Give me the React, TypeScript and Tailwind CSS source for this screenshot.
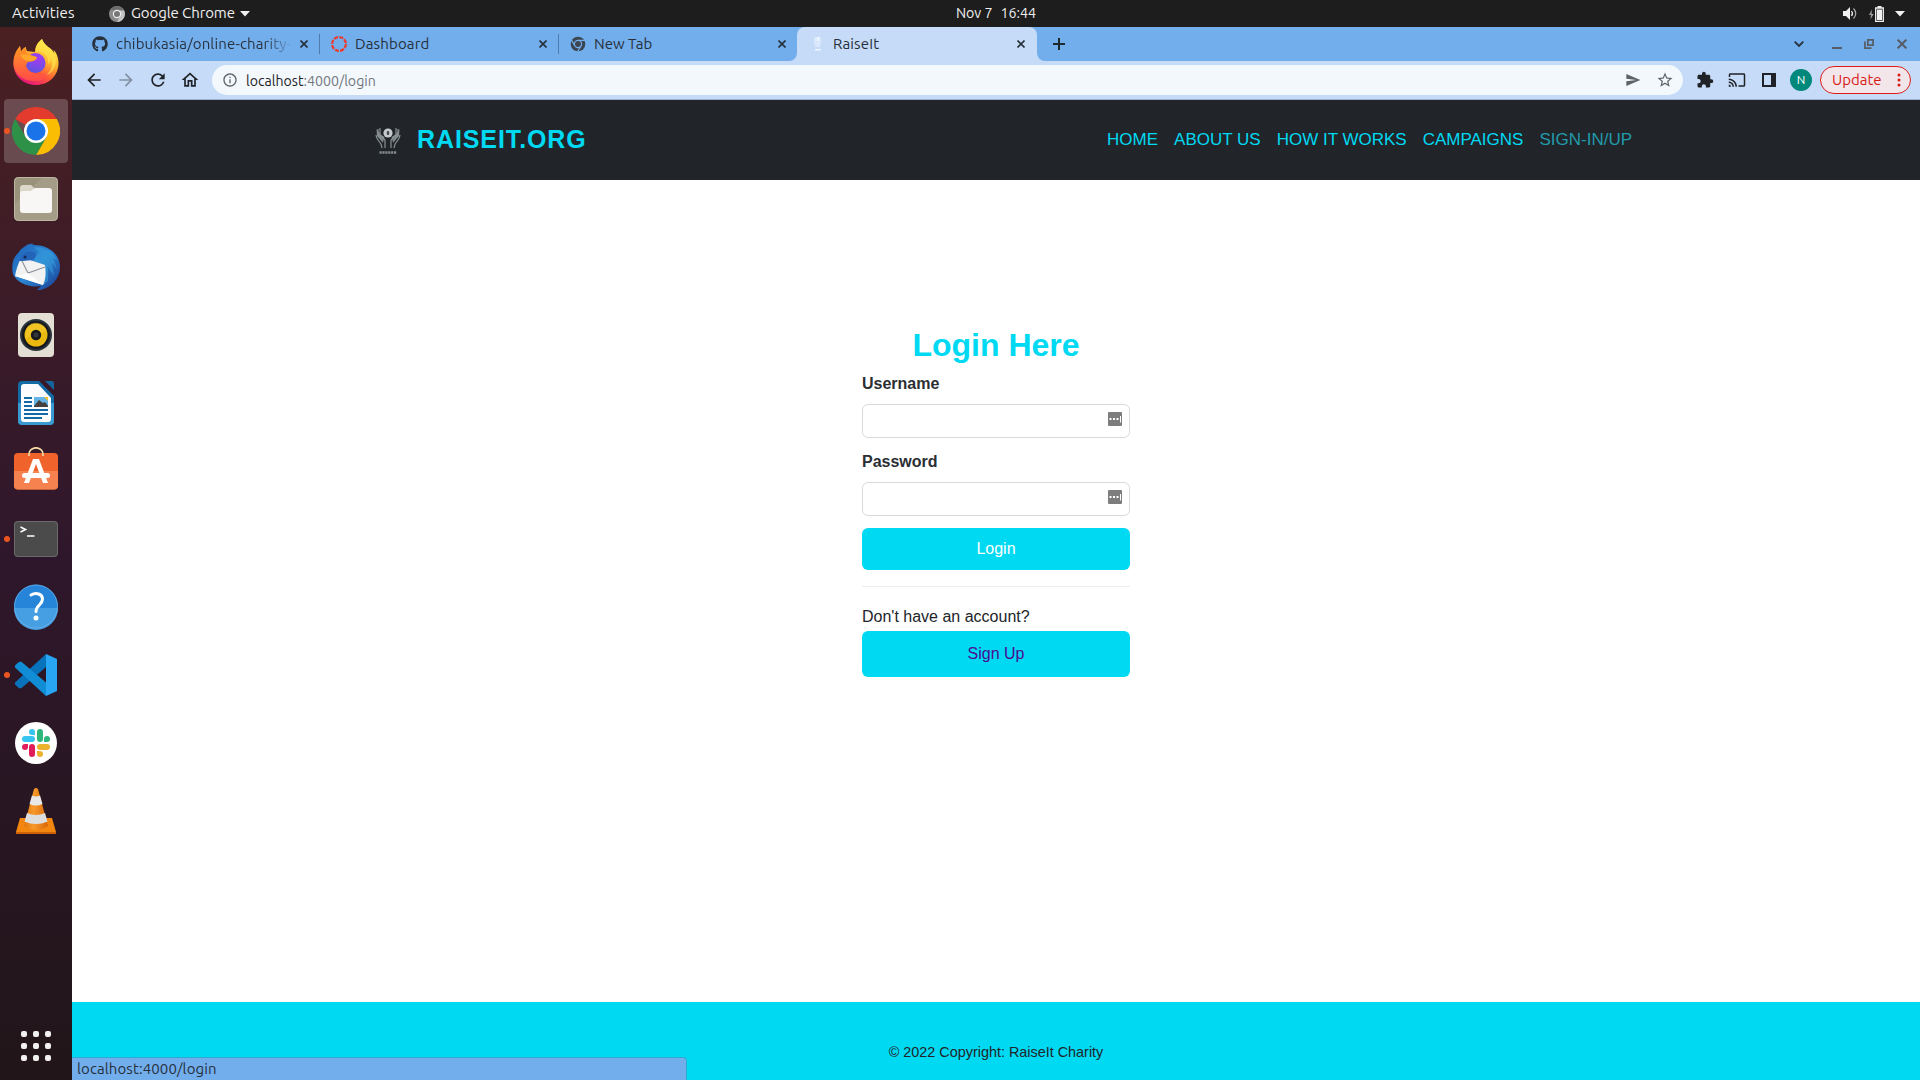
import React from "react";
import { FaGithub } from "react-icons/fa";
import {
  MdArrowBack,
  MdArrowForward,
  MdCast,
  MdExtension,
  MdInfoOutline,
  MdOutlineHome,
  MdRefresh,
  MdSend,
  MdStarBorder,
} from "react-icons/md";

type IconProps = { className?: string };

/* ---------- dock icons ---------- */

const Firefox = () => (
  <svg viewBox="0 0 48 48" className="size-12">
    <defs>
      <linearGradient id="ffBody" x1="0.8" y1="0.1" x2="0.3" y2="1">
        <stop offset="0" stopColor="#fff44f" />
        <stop offset="0.35" stopColor="#ffb22e" />
        <stop offset="0.65" stopColor="#ff5a36" />
        <stop offset="1" stopColor="#e5107f" />
      </linearGradient>
      <radialGradient id="ffGlobe" cx="0.6" cy="0.25" r="0.8">
        <stop offset="0" stopColor="#a63af5" />
        <stop offset="1" stopColor="#5a55dd" />
      </radialGradient>
      <linearGradient id="ffHead" x1="0" y1="0" x2="0" y2="1">
        <stop offset="0" stopColor="#ff9a1f" />
        <stop offset="1" stopColor="#ff4a4a" />
      </linearGradient>
    </defs>
    <path d="M30 0c-5 4-7 8-7 13l-8-1c-1-2-1-3-1-4-3 1-4 3-5 5l-1-6C4 12 1.500 18 1.500 25c0 12 10 21 22.500 21s22.500-9 22.500-22c0-5-2-11-5-13l1 4C40 8 33 8 30 0z" fill="url(#ffBody)" />
    <circle cx="23.500" cy="24" r="10" fill="url(#ffGlobe)" />
    <path d="M8 7C3 13 1.500 18 1.500 25 3 38 14 42 22 42c7 0 13-3 15-9-7 4-16 3-20-1-3-3-4-6-1-9 3 0 7-1 9-4l-6-3c-3 0-6-2-5-8-3 1-4 3-5 5z" fill="url(#ffHead)" />
    <path d="M8 16c5-2 10 0 17 2-1 4-5 5-10 4-4-1-5-4-7-6z" fill="#ffa62b" />
    <path d="M24 13c8-1 13 4 12 12 3-2 3-5 2-7 4 7 2 14-4 18 8-2 12-12 9-20C40 10 33 8 30 0c-4 4-7 7-6 13z" fill="#ffe14a" fillOpacity="0.7" />
  </svg>
);

const Chrome = () => (
  <svg viewBox="0 0 48 48" className="size-12">
    <path d="M24 24 3.200 12A24 24 0 0 1 44.800 12z" fill="#e33b2e" />
    <path d="M24 12H44.800A24 24 0 0 1 24 48L34.400 30z" fill="#fbbc04" />
    <path d="M13.600 30 3.200 12A24 24 0 0 0 24 48L34.400 30 24 32z" fill="#2d9247" />
    <circle cx="24" cy="24" r="12" fill="#fff" />
    <circle cx="24" cy="24" r="9.500" fill="#1a73e8" />
  </svg>
);

const Files = () => (
  <svg viewBox="0 0 48 48" className="size-12">
    <rect x="2" y="2" width="44" height="44" rx="4.500" fill="#9b927c" />
    <path d="M3 28 30 3h12a3 3 0 0 1 3 3v36a3 3 0 0 1-3 3H6a3 3 0 0 1-3-3z" fill="#a9a18d" fillOpacity="0.7" />
    <rect x="2.500" y="2.500" width="43" height="43" rx="4" fill="none" stroke="#bdb6a5" />
    <path d="M8 13a3 3 0 0 1 3-3h8l4 4h7v8H8z" fill="#dcd8c9" />
    <path d="M8 19a3 3 0 0 1 3-3h8l4-3h14a3 3 0 0 1 3 3v19a3 3 0 0 1-3 3H11a3 3 0 0 1-3-3z" fill="#f8f7f5" />
  </svg>
);

const Thunderbird = () => (
  <svg viewBox="0 0 48 48" className="size-12">
    <defs>
      <linearGradient id="tbBlue" x1="0" y1="0" x2="1" y2="1">
        <stop offset="0" stopColor="#1d5fb5" />
        <stop offset="0.5" stopColor="#2d86d4" />
        <stop offset="1" stopColor="#173a8f" />
      </linearGradient>
    </defs>
    <path d="M12 4c3-3 7-4 10-3l-2 1c16-1 28 9 28 22 0 11-8 20-19 23l-4 0 4-4C17 45 5 40 1 31-1 22 1 14 7 9c1-2 3-4 5-5z" fill="url(#tbBlue)" />
    <path d="M22 4c10 0 20 5 23 13l-4-2 4 11-5-6 2 13-6-9v14l-6 5-4-22-8-7c5 1 8-2 9-5z" fill="#37a0dc" fillOpacity="0.55" />
    <path d="m9 15 9 2 15 5c1 7 1 14-2 20L3 33c1-6 3-12 6-18z" fill="#f2f2f2" />
    <path d="m9 16 7 14 17-6" fill="none" stroke="#8d9299" strokeWidth="1.100" />
    <path d="M3 33 16 30l15 12z" fill="#fff" />
    <path d="M7 18c3-8 8-11 15-9 3 2 2 6-1 8l-10 1z" fill="#2363b8" />
    <circle cx="13" cy="14" r="1.500" fill="#122b55" />
  </svg>
);

const Rhythmbox = () => (
  <svg viewBox="0 0 48 48" className="size-12">
    <rect x="6" y="2" width="36" height="44" rx="4" fill="#e3dfd4" />
    <circle cx="24" cy="24" r="16" fill="#2d333c" />
    <circle cx="24" cy="24" r="14" fill="#15181d" />
    <circle cx="24" cy="24" r="11.500" fill="#eab90f" />
    <path d="M13 27 35 20a11.500 11.500 0 0 0-20-4z" fill="#f8cf38" fillOpacity="0.5" />
    <circle cx="24" cy="24" r="5.200" fill="#17191c" />
    <circle cx="24" cy="24" r="2.500" fill="#34373b" />
  </svg>
);

const Writer = () => (
  <svg viewBox="0 0 48 48" className="size-12">
    <path d="M10 2h17l15 15v25a4 4 0 0 1-4 4H10a4 4 0 0 1-4-4V6a4 4 0 0 1 4-4z" fill="#136ba5" />
    <path d="M6 24h36v18a4 4 0 0 1-4 4H10a4 4 0 0 1-4-4z" fill="#3a9bd0" />
    <path d="M33 2h7a2 2 0 0 1 2 2v7z" fill="#16649c" />
    <path d="M12 5h14l13 14v21a3 3 0 0 1-3 3H12a3 3 0 0 1-3-3V8a3 3 0 0 1 3-3z" fill="#fbfcfd" />
    <path d="M12 19h8M12 23h8M12 27h8M12 31h24M12 35h24M12 39h18" stroke="#136ba5" strokeWidth="2" />
    <rect x="22" y="18" width="14" height="10" fill="#62b5e6" />
    <path d="m22 27 5-6 4 3 2-1 3 4v1H22z" fill="#45413e" />
    <path d="M32 18h4v4z" fill="#f2c230" />
  </svg>
);

const Software = () => (
  <svg viewBox="0 0 48 48" className="size-12">
    <rect x="2" y="6" width="44" height="36.500" rx="4" fill="#f0642b" />
    <path d="M2 24h44v14.500a4 4 0 0 1-4 4H6a4 4 0 0 1-4-4z" fill="#f5824f" />
    <path d="M17 9V7a7 6.200 0 0 1 14 0v2" fill="none" stroke="#f5d9a5" strokeWidth="1.700" />
    <path d="M21 12h6l9 24h-5l-7-19-7 19h-5z" fill="#fff" />
    <rect x="10" y="26" width="28" height="5" rx="2.500" fill="#fff" />
  </svg>
);

const Terminal = () => (
  <svg viewBox="0 0 48 48" className="size-12">
    <rect x="2" y="6" width="44" height="36" rx="4" fill="#4b4b4b" />
    <rect x="2.500" y="6.500" width="43" height="35" rx="3.500" fill="none" stroke="#6a6a6a" />
    <path d="m8.500 12 5 2.500-5 2.500M15 21h7.500" fill="none" stroke="#fff" strokeWidth="1.600" />
  </svg>
);

const Help = () => (
  <svg viewBox="0 0 48 48" className="size-12">
    <circle cx="24" cy="23.500" r="22" fill="#2785d9" />
    <path d="M2 25a22 22 0 0 0 44 0z" fill="#469fe2" />
    <circle cx="24" cy="23.500" r="21.500" fill="none" stroke="#70b4e8" strokeOpacity="0.7" />
    <path d="M19 12c5-3 11.500-1 11.500 4 0 6-6.500 6-6.500 12.500" fill="none" stroke="#fff" strokeWidth="3" strokeLinecap="round" />
    <circle cx="24" cy="35" r="2.500" fill="#fff" />
  </svg>
);

const VsCode = () => (
  <svg viewBox="0 0 48 48" className="size-12">
    <path d="M34 3v13L9 37.500 6.500 36.800 3 33.500v-2z" fill="#0872ba" />
    <path d="M3 16.500v-2l3.500-3.300L9 10.500l25 21V45z" fill="#118dd6" />
    <path d="M34 3 45 8v32l-11 5z" fill="#28a6f4" />
  </svg>
);

const Slack = () => (
  <svg viewBox="0 0 48 48" className="size-12">
    <circle cx="24" cy="24" r="21" fill="#fff" />
    <rect x="10" y="17" width="13" height="6" rx="3" fill="#36c5f0" />
    <path d="M20 10a3 3 0 0 1 3 3v3h-3a3 3 0 0 1 0-6z" fill="#36c5f0" />
    <rect x="25" y="10" width="6" height="13" rx="3" fill="#2eb67d" />
    <path d="M38 20a3 3 0 0 1-3 3h-3v-3a3 3 0 0 1 6 0z" fill="#2eb67d" />
    <rect x="25" y="25" width="13" height="6" rx="3" fill="#ecb22e" />
    <path d="M28 38a3 3 0 0 1-3-3v-3h3a3 3 0 0 1 0 6z" fill="#ecb22e" />
    <rect x="17" y="25" width="6" height="13" rx="3" fill="#e01e5a" />
    <path d="M10 28a3 3 0 0 1 3-3h3v3a3 3 0 0 1-6 0z" fill="#e01e5a" />
  </svg>
);

const Vlc = () => (
  <svg viewBox="0 0 48 48" className="size-12">
    <defs>
      <linearGradient id="vlcO" x1="0" y1="0" x2="1" y2="0">
        <stop offset="0" stopColor="#e2760c" />
        <stop offset="0.4" stopColor="#f79a2b" />
        <stop offset="1" stopColor="#d9650a" />
      </linearGradient>
    </defs>
    <path d="M8 31h32l4 14v2H4v-2z" fill="#f2860f" />
    <path d="M4 45h40v2H4z" fill="#cf6108" />
    <path d="M22 2q2-2 4 0l10 37q-12 8-24 0z" fill="url(#vlcO)" />
    <path d="m20 8.500-2.500 8.500q6.500 3 13 0l-2.500-8.500q-4 2-8 0z" fill="#e8e8e8" />
    <path d="m15 26-2.500 8.500q11.500 5 23 0L33 26q-9 4-18 0z" fill="#dedede" />
  </svg>
);

const dockItems: { name: string; Icon: () => React.ReactElement; running?: boolean; focused?: boolean }[] = [
  { name: "firefox", Icon: Firefox },
  { name: "chrome", Icon: Chrome, running: true, focused: true },
  { name: "files", Icon: Files },
  { name: "thunderbird", Icon: Thunderbird },
  { name: "rhythmbox", Icon: Rhythmbox },
  { name: "writer", Icon: Writer },
  { name: "software", Icon: Software },
  { name: "terminal", Icon: Terminal, running: true },
  { name: "help", Icon: Help },
  { name: "vscode", Icon: VsCode, running: true },
  { name: "slack", Icon: Slack },
  { name: "vlc", Icon: Vlc },
];

function Dock() {
  return (
    <aside className="flex w-[72px] shrink-0 flex-col items-center bg-linear-to-b from-[#4a2022] via-[#2f172b] to-[#211519] pt-0.5">
      {dockItems.map(({ name, Icon, running, focused }) => (
        <div key={name} className="flex h-[68px] w-full items-center justify-center">
          <div className={`relative flex size-16 items-center justify-center rounded-[4px] ${focused ? "bg-white/20" : ""}`}>
            {running && <span className="absolute left-0 top-[29px] size-1.5 rounded-full bg-[#e95420]" />}
            <Icon />
          </div>
        </div>
      ))}
      <div className="mt-auto mb-[19px] grid grid-cols-3 gap-1.5">
        {Array.from({ length: 9 }, (_, i) => (
          <span key={i} className="size-1.5 rounded-[2px] bg-[#f2f0ef]" />
        ))}
      </div>
    </aside>
  );
}

/* ---------- small glyphs ---------- */

const ChromeMono = ({ className }: IconProps) => (
  <svg viewBox="0 0 16 16" className={className}>
    <circle cx="8" cy="8" r="7.300" fill="currentColor" />
    <g stroke="#72adec" strokeWidth="1.200" fill="none">
      <circle cx="8" cy="8" r="3.600" />
      <path d="M8 4.400h7M4.900 9.800 1.300 3.900M11.100 9.800 7.600 15.500" />
    </g>
  </svg>
);

const ChromeGray = () => (
  <svg viewBox="0 0 16 16" className="size-4">
    <circle cx="8" cy="8" r="8" fill="#8b8b8b" />
    <path d="M8 4.200h6.900A8 8 0 0 1 8 16l3.300-6z" fill="#c4c4c4" />
    <path d="M1.100 4A8 8 0 0 1 14.900 4.200H8z" fill="#6d6d6d" />
    <circle cx="8" cy="8" r="4.200" fill="#efefef" />
    <circle cx="8" cy="8" r="3" fill="#777" />
  </svg>
);

const Close = ({ className }: IconProps) => (
  <svg viewBox="0 0 8 8" className={className} fill="none" stroke="currentColor" strokeWidth="1.600">
    <path d="m.5.5 7 7M7.500.5l-7 7" />
  </svg>
);

const HandsMark = ({ className }: IconProps) => (
  <svg viewBox="0 0 26 28" className={className} fill="none">
    <path d="M1.500 2c2 3 4 6 8 8L8.500 14 2 9zM24.500 2c-2 3-4 6-8 8l1 4L24 9z" fill="#7f8789" />
    <path d="M3 2v7l5 6M1 8c0 4 3 6 5 9l1 4M5 1v7l5 5v8M23 2v7l-5 6M25 8c0 4-3 6-5 9l-1 4M21 1v7l-5 5v8" stroke="#8a9194" strokeWidth="1.200" />
    <circle cx="13" cy="6" r="4.600" fill="#c3cbcd" />
    <rect x="11.800" y="4" width="2.400" height="4" rx="1" fill="#43494c" />
    <path d="M4.500 25.500h17" stroke="#858c8f" strokeWidth="2.500" strokeDasharray="2.200 .7" />
  </svg>
);

/* ---------- desktop top bar ---------- */

function TopBar() {
  return (
    <header className="grid h-[27px] shrink-0 grid-cols-3 items-center bg-[#1d1d1d] text-[15px] text-[#f0f0f0]">
      <div className="flex items-center pl-3">
        <span className="w-[97px] tracking-[0.1px]">Activities</span>
        <ChromeGray />
        <span className="ml-1.5 tracking-[-0.1px]">Google Chrome</span>
        <svg viewBox="0 0 10 6" className="ml-[5px] h-1.5 w-2.5">
          <path d="M0 0h10L5 5.500z" fill="#f0f0f0" />
        </svg>
      </div>
      <div className="flex justify-center gap-2 pl-[72px] text-[14.200px]">
        <span>Nov 7</span>
        <span>16:44</span>
      </div>
      <div className="flex items-center justify-end pr-[15px]">
        <svg viewBox="0 0 14 13" className="mr-3 h-[13px] w-3.5" fill="none">
          <path d="M0 4h3l4-4v13L3 9H0z" fill="#f0f0f0" />
          <path d="M8.500 4q2 2.500 0 5" stroke="#f0f0f0" strokeWidth="1.200" />
          <path d="M10.500 1.500q4.500 5 0 10" stroke="#aaa" strokeWidth="1.200" />
        </svg>
        <svg viewBox="0 0 15 16" className="mr-[11px] h-4 w-[15px]">
          <path d="M3 3.500-.2 9H2l-.6 4.500L4.800 8H2.600z" fill="#999" />
          <path d="M6.700 2h7.600v13.300H6.700z" fill="none" stroke="#f0f0f0" strokeWidth="1.300" />
          <path d="M8.500 0h4v2h-4zM8 3.500h5V14H8z" fill="#f0f0f0" />
        </svg>
        <svg viewBox="0 0 10 6" className="h-1.5 w-2.5">
          <path d="M0 0h10L5 5.500z" fill="#f0f0f0" />
        </svg>
      </div>
    </header>
  );
}

/* ---------- browser chrome ---------- */

function Tab({ icon, title, titleClass, sep }: { icon: React.ReactNode; title: string; titleClass: string; sep?: boolean }) {
  return (
    <div className="flex h-full w-[239px] items-center pl-3 text-[#26303a]">
      <span className="flex size-4 shrink-0 items-center justify-center">{icon}</span>
      <span className={`ml-2 w-[174px] shrink-0 overflow-hidden whitespace-nowrap text-[15px] ${titleClass}`}>{title}</span>
      <span className="ml-2.5 flex w-2 shrink-0 justify-center">
        <Close className="size-2" />
      </span>
      {sep && <span className="-mr-px ml-auto h-5 w-px shrink-0 bg-[#4f7cad]" />}
    </div>
  );
}

function TabStrip() {
  return (
    <div className="flex h-[34px] items-center bg-[#72adec] pl-2">
      <Tab
        icon={<FaGithub size={16} />}
        title="chibukasia/online-charity-"
        titleClass="tracking-[0.15px] bg-linear-to-r from-[#26303a] from-85% to-[#26303a]/10 bg-clip-text text-transparent"
        sep
      />
      <Tab
        icon={
          <svg viewBox="0 0 16 16" className="size-4">
            <circle cx="8" cy="8" r="6.900" fill="none" stroke="#f0372b" strokeWidth="2.200" strokeDasharray="4.200 1.220" />
          </svg>
        }
        title="Dashboard"
        titleClass="tracking-[0.15px]"
        sep
      />
      <Tab icon={<ChromeMono className="size-4 text-[#3c4650]" />} title="New Tab" titleClass="" />
      <div className="relative h-full w-60 rounded-t-lg bg-[#c6dbf8]">
        <svg viewBox="0 0 8 8" className="absolute -left-2 bottom-0 size-2 text-[#c6dbf8]">
          <path d="M8 0v8H0a8 8 0 0 0 8-8z" fill="currentColor" />
        </svg>
        <svg viewBox="0 0 8 8" className="absolute -right-2 bottom-0 size-2 text-[#c6dbf8]">
          <path d="M0 0v8h8a8 8 0 0 1-8-8z" fill="currentColor" />
        </svg>
        <Tab
          icon={
            <svg viewBox="0 0 16 16" className="size-4">
              <path d="M5 1h7v5l-1 5H6L5 6z" fill="#d9e9fb" />
              <path d="M8 1h2v4H8zM6 13h6v1.500H6z" fill="#edf6fe" />
            </svg>
          }
          title="RaiseIt"
          titleClass="tracking-[0.15px]"
        />
      </div>
      <svg viewBox="0 0 12 12" className="ml-4 size-3" stroke="#1f2930" strokeWidth="2">
        <path d="M6 0v12M0 6h12" />
      </svg>
      <div className="ml-auto flex items-center pr-[13px] text-[#575d66]">
        <svg viewBox="0 0 10 6" className="mr-7 h-1.5 w-2.5" fill="none" stroke="#26303a" strokeWidth="1.800">
          <path d="m.7.7 4.300 4.300L9.300.7" />
        </svg>
        <span className="mt-2 mr-[22px] h-0.5 w-2.5 bg-[#575d66]" />
        <svg viewBox="0 0 10 10" className="mr-[23px] size-2.5" fill="none" stroke="currentColor" strokeWidth="1.700">
          <path d="M3.800.9h5.300v5.300H3.800zM.9 2.500v6.600h6.600" />
        </svg>
        <Close className="size-2.5" />
      </div>
    </div>
  );
}

function Toolbar() {
  return (
    <div className="flex h-[39px] items-center border-b border-[#9db0c9] bg-[#c6dbf8] pl-3 pr-[9px] text-[#1f2327]">
      <div className="flex shrink-0 gap-3">
        <MdArrowBack size={20} />
        <MdArrowForward size={20} className="text-[#8291a5]" />
        <MdRefresh size={20} />
        <MdOutlineHome size={20} />
      </div>
      <div className="ml-3 flex h-[30px] w-[1471px] shrink-0 items-center rounded-full bg-[#f3f8fd] pl-2.5 pr-[9px] text-[#5f6368]">
        <MdInfoOutline size={16} />
        <span className="ml-2 pt-0.5 text-[14.150px] leading-5 text-[#71767b]">
          <span className="text-[#1f2327]">localhost</span>:4000/login
        </span>
        <MdSend size={16} className="ml-auto mr-[15px]" />
        <MdStarBorder size={18} />
      </div>
      <MdExtension size={18} className="ml-[13px]" />
      <MdCast size={18} className="ml-[14px]" />
      <span className="ml-4 h-3.5 w-3.5 border-2 border-r-[5px] border-[#1f2327]" />
      <span className="ml-3.5 flex size-[22px] items-center justify-center rounded-full bg-[#00897b] text-[12px] text-white">N</span>
      <span className="ml-auto flex h-7 w-[91px] items-center rounded-full border border-[#dc1d16] bg-[#f3e6ea] pl-[11px] text-[15px] text-[#d71c17]">
        <span className="w-[54px]">Update</span>
        <svg viewBox="0 0 4 14" className="ml-[11px] h-3.5 w-1" fill="currentColor">
          <circle cx="2" cy="2" r="1.500" />
          <circle cx="2" cy="7" r="1.500" />
          <circle cx="2" cy="12" r="1.500" />
        </svg>
      </span>
    </div>
  );
}

/* ---------- web page ---------- */

function SiteNav() {
  return (
    <nav className="flex h-20 shrink-0 items-center bg-[#212529] pl-[303px] pr-72 font-['Liberation_Sans',Arial,sans-serif] text-[#00d9f2]">
      <HandsMark className="mt-0.5 h-7 w-[26px]" />
      <span className="ml-4 text-[25px] font-bold tracking-[0.900px]">RAISEIT.ORG</span>
      <div className="ml-auto flex gap-4 text-[17px]">
        <a>HOME</a>
        <a>ABOUT US</a>
        <a>HOW IT WORKS</a>
        <a>CAMPAIGNS</a>
        <a className="text-[#219aab]">SIGN-IN/UP</a>
      </div>
    </nav>
  );
}

function Field({ label }: { label: string }) {
  return (
    <label className="block">
      <span className="block font-bold leading-6 text-[#2b2f33]">{label}</span>
      <span className="mt-2 flex h-[34px] items-start justify-end rounded-md border border-[#d9d9d9] pr-[7px] pt-[7px]">
        <svg viewBox="0 0 14 14" className="size-3.5">
          <rect width="14" height="14" rx="1" fill="#7d7d7d" />
          <path d="M1.500 6h2v2h-2zM5 6h2v2H5zM8.500 6h2v2h-2zM12 4h1v6.500h-1z" fill="#fff" />
        </svg>
      </span>
    </label>
  );
}

function LoginPage() {
  return (
    <main className="flex flex-1 flex-col font-['Liberation_Sans',Arial,sans-serif] text-base">
      <div className="ml-[790px] flex w-[268px] flex-col pt-[146px]">
        <h2 className="mb-[7px] text-center text-[32px] font-bold leading-[39px] text-[#00d9f2]">Login Here</h2>
        <Field label="Username" />
        <div className="h-3" />
        <Field label="Password" />
        <button className="mt-3 h-[42px] rounded-md bg-[#00d9f2] text-white">Login</button>
        <hr className="mt-4 border-[#eeeeee]" />
        <p className="mt-[18px] leading-6 text-[#212529]">Don't have an account?</p>
        <button className="mt-0.5 h-[46px] rounded-md bg-[#00d9f2] text-[#4b0a92]">Sign Up</button>
      </div>
    </main>
  );
}

export default function App() {
  return (
    <div className="flex h-[1080px] w-[1920px] flex-col overflow-hidden bg-white font-['Ubuntu','Noto_Sans',sans-serif]">
      <TopBar />
      <div className="flex min-h-0 flex-1">
        <Dock />
        <div className="relative flex min-w-0 flex-1 flex-col">
          <TabStrip />
          <Toolbar />
          <SiteNav />
          <LoginPage />
          <footer className="flex h-[78px] shrink-0 justify-center bg-[#00d9f2] pt-[39px] font-['Liberation_Sans',Arial,sans-serif] text-[14.400px] leading-[22px] text-[#212529]">
            © 2022 Copyright: RaiseIt Charity
          </footer>
          <div className="absolute bottom-0 left-0 flex h-[23px] w-[615px] items-center rounded-tr-[4px] border-t border-r border-[#2fa9d0] bg-[#72adec] pl-[5px] text-[15px] tracking-[0.1px] text-[#26303a]">
            localhost:4000/login
          </div>
        </div>
      </div>
    </div>
  );
}
